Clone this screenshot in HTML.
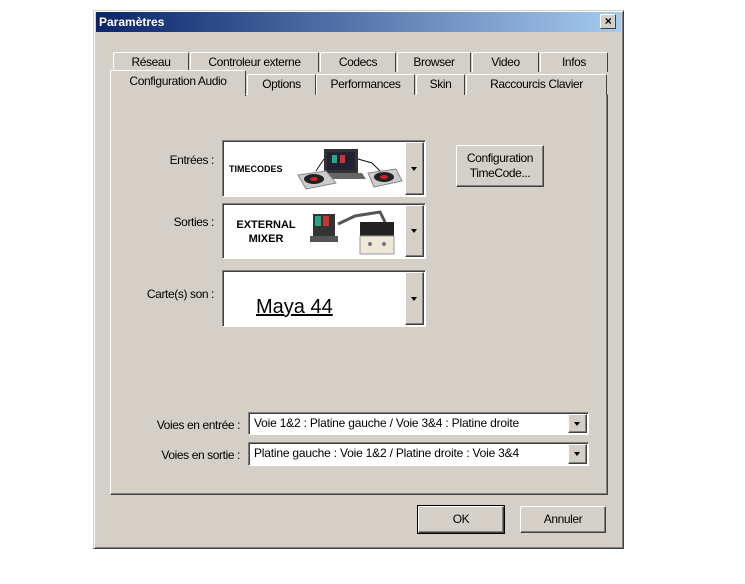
<!DOCTYPE html>
<html><head><meta charset="utf-8"><style>
*{box-sizing:border-box;margin:0;padding:0}
body{width:745px;height:584px;background:#fff;position:relative;overflow:hidden;font-family:"Liberation Sans",sans-serif;font-size:12px;letter-spacing:-0.4px;color:#000}
.a{position:absolute}
.dlg{left:93px;top:10px;width:531px;height:539px;background:#d4d0c8;border:1px solid;border-color:#d4d0c8 #404040 #404040 #d4d0c8;box-shadow:inset 1px 1px #fff,inset -1px -1px #808080}
.title{left:96px;top:12px;width:525px;height:20px;background:linear-gradient(90deg,#0a246a,#a6caf0);color:#fff;font-weight:bold;font-size:12px;letter-spacing:0;line-height:20px;padding-left:3px}
.x{left:600px;top:14px;width:16px;height:15px;background:#d4d0c8;border:1px solid;border-color:#fff #404040 #404040 #fff;font:bold 12px "Liberation Sans",sans-serif;text-align:center;line-height:12px}
.tab{height:20px;border:1px solid;border-color:#fff #404040 transparent #fff;border-bottom:none;text-align:center;line-height:19px;background:#d4d0c8;border-radius:2px 2px 0 0}
.panel{left:110px;top:94px;width:498px;height:401px;border:1px solid;border-color:#fff #404040 #404040 #fff;box-shadow:inset -1px -1px #808080}
.btn{border:1px solid;border-color:#fff #404040 #404040 #fff;box-shadow:inset -1px -1px #808080;background:#d4d0c8;text-align:center}
.box{background:#fff;border:1px solid;border-color:#808080 #fff #fff #808080;box-shadow:inset 1px 1px #404040}
.arr{width:0;height:0;border-left:3.5px solid transparent;border-right:3.5px solid transparent;border-top:4px solid #000;position:absolute;left:50%;top:50%;margin:-2px 0 0 -3.5px}
.lbl{text-align:right;width:120px}
</style></head><body>
<div class="a dlg"></div>
<div class="a title">Paramètres</div>
<div class="a x">×</div>
<div class="a tab" style="left:113px;top:52px;width:76px">Réseau</div>
<div class="a tab" style="left:190px;top:52px;width:129px">Controleur externe</div>
<div class="a tab" style="left:320px;top:52px;width:76px">Codecs</div>
<div class="a tab" style="left:397px;top:52px;width:74px">Browser</div>
<div class="a tab" style="left:472px;top:52px;width:67px">Video</div>
<div class="a tab" style="left:540px;top:52px;width:68px">Infos</div>
<div class="a panel"></div>
<div class="a tab" style="left:247px;top:74px;width:69px;height:21px">Options</div>
<div class="a tab" style="left:316px;top:74px;width:99px;height:21px">Performances</div>
<div class="a tab" style="left:416px;top:74px;width:49px;height:21px">Skin</div>
<div class="a tab" style="left:466px;top:74px;width:141px;height:21px">Raccourcis Clavier</div>
<div class="a tab" style="left:110px;top:70px;width:136px;height:26px;line-height:20px;border-bottom:none">Configuration Audio</div>
<div class="a lbl" style="left:94px;top:153px">Entrées :</div>
<div class="a lbl" style="left:94px;top:215px">Sorties :</div>
<div class="a lbl" style="left:94px;top:287px">Carte(s) son :</div>
<div class="a box" style="left:222px;top:140px;width:204px;height:57px"></div>
<div class="a" style="left:229px;top:164px;font:bold 9px 'Liberation Sans',sans-serif;letter-spacing:0">TIMECODES</div>
<svg class="a" style="left:296px;top:147px" width="108" height="44">
<rect x="28" y="2" width="34" height="24" fill="#333"/><rect x="31" y="5" width="28" height="18" fill="#223"/><rect x="36" y="8" width="5" height="8" fill="#2a8"/><rect x="44" y="8" width="5" height="8" fill="#c33"/><polygon points="24,26 66,26 70,32 20,32" fill="#666"/>
<polygon points="2,28 30,24 40,36 10,42" fill="#ccc" stroke="#888"/><ellipse cx="18" cy="32" rx="10" ry="5" fill="#222"/><ellipse cx="18" cy="32" rx="4" ry="2" fill="#c22"/>
<polygon points="72,26 100,22 106,34 78,40" fill="#ccc" stroke="#888"/><ellipse cx="88" cy="30" rx="10" ry="5" fill="#222"/><ellipse cx="88" cy="30" rx="4" ry="2" fill="#c22"/>
<path d="M20,24 L28,12 M62,12 L76,16 L84,24" stroke="#111" fill="none"/></svg>
<div class="a btn" style="left:405px;top:142px;width:19px;height:53px"><div class="arr"></div></div>
<div class="a box" style="left:222px;top:203px;width:204px;height:56px"></div>
<div class="a" style="left:231px;top:218px;font:bold 11px 'Liberation Sans',sans-serif;letter-spacing:0;text-align:center;line-height:14px;width:70px">EXTERNAL<br>MIXER</div>
<svg class="a" style="left:310px;top:206px" width="95" height="50">
<rect x="3" y="8" width="22" height="22" fill="#333"/><rect x="5" y="10" width="6" height="10" fill="#2a8"/><rect x="13" y="10" width="6" height="10" fill="#c33"/><rect x="0" y="30" width="28" height="6" fill="#555"/>
<path d="M28,18 L45,10 L70,6 L75,16" stroke="#555" stroke-width="3" fill="none"/>
<rect x="50" y="16" width="34" height="14" fill="#222"/><rect x="50" y="30" width="34" height="18" fill="#eee8d8" stroke="#999"/><circle cx="60" cy="38" r="2" fill="#777"/><circle cx="74" cy="38" r="2" fill="#777"/></svg>
<div class="a btn" style="left:405px;top:205px;width:19px;height:52px"><div class="arr"></div></div>
<div class="a box" style="left:222px;top:270px;width:204px;height:57px"></div>
<div class="a" style="left:256px;top:296px;font:20px 'Liberation Sans',sans-serif;letter-spacing:0;text-decoration:underline">Maya 44</div>
<div class="a btn" style="left:405px;top:272px;width:19px;height:53px"><div class="arr"></div></div>
<div class="a btn" style="left:456px;top:145px;width:88px;height:42px;padding-top:5px;line-height:15px">Configuration<br>TimeCode...</div>
<div class="a" style="left:100px;top:418px;width:140px;text-align:right">Voies en entrée :</div>
<div class="a" style="left:100px;top:448px;width:140px;text-align:right">Voies en sortie :</div>
<div class="a box" style="left:248px;top:412px;width:341px;height:23px;padding:3px 0 0 5px;letter-spacing:-0.2px">Voie 1&amp;2 : Platine gauche / Voie 3&amp;4 : Platine droite</div>
<div class="a btn" style="left:568px;top:414px;width:19px;height:19px"><div class="arr"></div></div>
<div class="a box" style="left:248px;top:442px;width:341px;height:24px;padding:3px 0 0 5px;letter-spacing:-0.2px">Platine gauche : Voie 1&amp;2 / Platine droite : Voie 3&amp;4</div>
<div class="a btn" style="left:568px;top:444px;width:19px;height:20px"><div class="arr"></div></div>
<div class="a btn" style="left:418px;top:506px;width:86px;height:27px;line-height:24px;outline:1px solid #000">OK</div>
<div class="a btn" style="left:520px;top:506px;width:86px;height:27px;line-height:24px">Annuler</div>
</body></html>
